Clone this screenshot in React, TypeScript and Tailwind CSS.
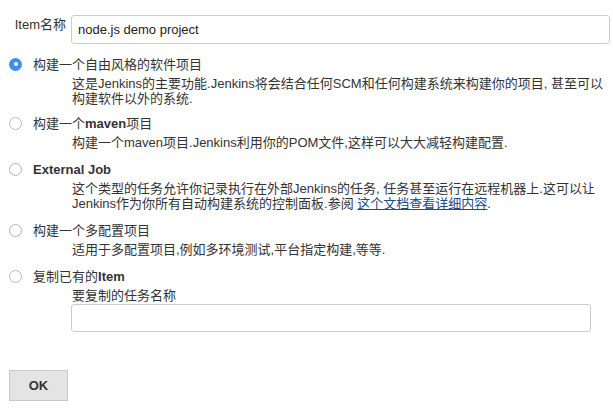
import React from "react";

function Radio({ checked }: { checked?: boolean }) {
  if (checked) {
    return (
      <span className="flex h-[13px] w-[13px] shrink-0 items-center justify-center rounded-full bg-[#3d8ff0]">
        <span className="h-[4px] w-[4px] rounded-full bg-white" />
      </span>
    );
  }
  return <span className="block h-[13px] w-[13px] shrink-0 rounded-full border border-[#b8b8b8] bg-white" />;
}

function Option({
  checked,
  label,
  children,
  first,
}: {
  checked?: boolean;
  label: React.ReactNode;
  children?: React.ReactNode;
  first?: boolean;
}) {
  return (
    <div className={first ? "mb-[7px]" : "mb-[9px]"}>
      <div className="flex h-[20px] items-center pl-[9px]">
        <Radio checked={checked} />
        <span className="ml-[11px] leading-[15px]">{label}</span>
      </div>
      {children && <div className="pl-[72px] pt-[2px] leading-[15px]">{children}</div>}
    </div>
  );
}

export default function App() {
  return (
    <div className="relative h-[409px] w-[613px] overflow-hidden bg-white pt-[15px] font-['Liberation_Sans','Noto_Sans_CJK_SC',sans-serif] text-[13px] leading-[15px] text-[#333]">
      <div className="flex items-start">
        <label className="w-[66px] pt-[2px] text-right">Item名称</label>
        <div className="ml-[5px] flex h-[29px] w-[539px] items-center rounded-[3px] border border-[#ccc] bg-white px-[6px] text-[13px] text-[#222]">
          node.js demo project
        </div>
      </div>

      <div className="mt-[10px]">
        <Option first checked label="构建一个自由风格的软件项目">
          这是Jenkins的主要功能.Jenkins将会结合任何SCM和任何构建系统来构建你的项目, 甚至可以
          <br />
          构建软件以外的系统.
        </Option>
        <Option
          label={
            <>
              构建一个<b>maven</b>项目
            </>
          }
        >
          构建一个maven项目.Jenkins利用你的POM文件,这样可以大大减轻构建配置.
        </Option>
        <Option label={<b>External Job</b>}>
          这个类型的任务允许你记录执行在外部Jenkins的任务, 任务甚至运行在远程机器上.这可以让
          <br />
          Jenkins作为你所有自动构建系统的控制面板.参阅{" "}
          <a className="text-[#204a87] underline" href="#">
            这个文档查看详细内容
          </a>
          .
        </Option>
        <Option label="构建一个多配置项目">适用于多配置项目,例如多环境测试,平台指定构建,等等.</Option>
        <div>
          <div className="flex h-[20px] items-center pl-[9px]">
            <Radio />
            <span className="ml-[11px]">
              复制已有的<b>Item</b>
            </span>
          </div>
          <div className="pl-[72px] pt-[2px] leading-[15px]">要复制的任务名称</div>
          <div className="ml-[71px] mt-[1px] h-[28px] w-[520px] rounded-[3px] border border-[#ccc] bg-white" />
        </div>
      </div>

      <div className="mt-[38px] pl-[9px]">
        <button className="h-[31px] w-[59px] border border-[#c8c8c8] bg-[#e4e4e4] text-[13px] font-bold text-[#333]">
          OK
        </button>
      </div>
    </div>
  );
}
